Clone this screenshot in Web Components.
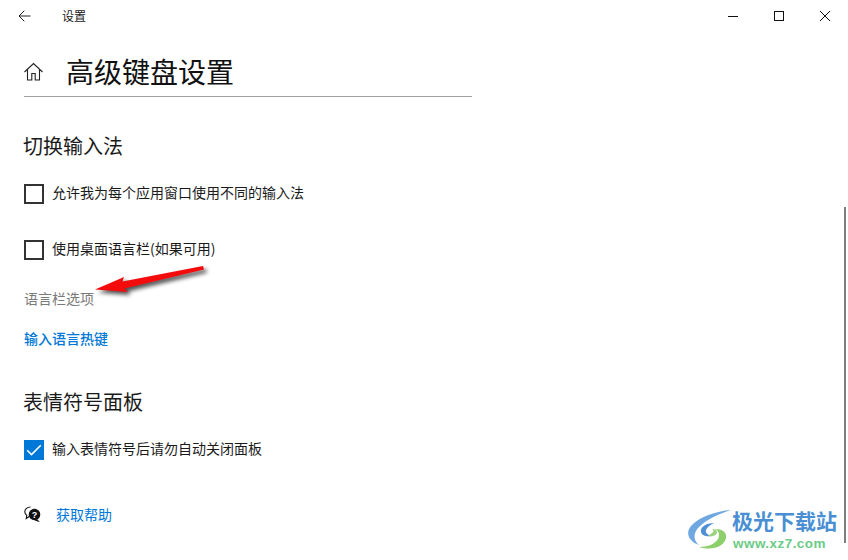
<!DOCTYPE html>
<html lang="zh-CN"><head><meta charset="utf-8">
<style>
html,body{margin:0;padding:0;background:#fff}
body{width:848px;height:560px;overflow:hidden;font-family:"Noto Sans CJK SC","Noto Sans",sans-serif;color:#000}
</style></head><body>
<settings-app>
  <title-bar slot="bar">设置</title-bar>
  <page-title>高级键盘设置</page-title>
  <section-head style="--top:30px">切换输入法</section-head>
  <check-row style="--top:19px">允许我为每个应用窗口使用不同的输入法</check-row>
  <check-row style="--top:36px">使用桌面语言栏(如果可用)</check-row>
  <muted-label>语言栏选项</muted-label>
  <link-row style="--top:20px">输入语言热键</link-row>
  <section-head style="--top:35px">表情符号面板</section-head>
  <check-row style="--top:19px" checked>输入表情符号后请勿自动关闭面板</check-row>
  <help-row>获取帮助</help-row>
  <red-arrow slot="over"></red-arrow>
  <scroll-thumb slot="over"></scroll-thumb>
  <brand-mark slot="over"></brand-mark>
</settings-app>
<script>
function def(name,html){
  customElements.define(name,class extends HTMLElement{
    constructor(){super();this.attachShadow({mode:'open'}).innerHTML=html;}
  });
}
def('settings-app',`<style>
:host{display:block;position:relative;width:848px;height:560px;overflow:hidden;background:#fff}
main{display:flex;flex-direction:column;align-items:flex-start;padding:0 0 0 24px}
</style><slot name="bar"></slot><main><slot></slot></main><slot name="over"></slot>`);
def('title-bar',`<style>
:host{display:flex;align-items:center;height:32px;font-size:12px;color:#1a1a1a}
.b{display:flex;align-items:center;justify-content:center}
.back{width:48px;margin-top:-1px}
.t{flex:1;padding-left:14px;line-height:32px}
.w{width:46px;height:32px}
svg{display:block}
</style>
<div class="b back"><svg width="13" height="12" viewBox="0 0 13 12" fill="none" stroke="#222" stroke-width="1"><path d="M12.500 6H1M6.300.7 1 6l5.300 5.300"/></svg></div>
<div class="t"><slot></slot></div>
<div class="b w"><svg width="10" height="10"><path d="M0 5.500h10" stroke="#111" stroke-width="1"/></svg></div>
<div class="b w"><svg width="10" height="10"><rect x=".5" y=".5" width="9" height="9" fill="none" stroke="#111"/></svg></div>
<div class="b w"><svg width="10" height="10"><path d="M0 0l10 10M10 0 0 10" stroke="#111" stroke-width="1"/></svg></div>`);
def('page-title',`<style>
:host{display:flex;align-items:center;width:448px;height:64px;border-bottom:1px solid #a0a0a0}
svg{display:block;margin:15px 22px 0 -1px}
span{font-size:28px;line-height:38px;color:#111;margin-top:13px;font-weight:400}
</style><svg width="21" height="19" viewBox="0 0 21 19" fill="none" stroke="#222" stroke-width="1.100"><path d="M1.500 10 10.500 1.500 19.500 10M4.500 7.500V18h4.300v-6.500h3.400V18h4.300V7.500"/></svg><span><slot></slot></span>`);
def('section-head',`<style>
:host{display:block;margin-top:var(--top);font-size:20px;line-height:38px;height:38px;color:#1a1a1a;margin-left:-1px}
</style><slot></slot>`);
def('check-row',`<style>
:host{display:flex;align-items:center;gap:8px;margin-top:var(--top);height:20px;font-size:14px;line-height:20px;color:#1a1a1a}
.box{width:20px;height:20px;box-sizing:border-box;border:2px solid #333;background:#fff}
:host([checked]) .box{border:0;background:#0078d7}
svg{display:none}
:host([checked]) svg{display:block}
span{margin-bottom:4px}
</style><div class="box"><svg width="20" height="20" fill="none" stroke="#fff" stroke-width="1.600"><path d="M3.200 10.300 7.500 14.600 16.800 5.300"/></svg></div><span><slot></slot></span>`);
def('muted-label',`<style>
:host{display:block;margin-top:28px;font-size:14px;line-height:20px;color:#7a7a7a}
</style><slot></slot>`);
def('link-row',`<style>
:host{display:block;margin-top:var(--top);font-size:14px;line-height:20px;font-weight:500;color:#0078d7}
</style><slot></slot>`);
def('help-row',`<style>
:host{display:flex;align-items:center;gap:15px;margin-top:45px;height:20px;font-size:14px;line-height:20px;color:#0078d7}
svg{display:block;margin-top:-1px}
span{margin-bottom:2px}
</style><svg width="17" height="17" viewBox="0 0 17 17"><path d="M6.500 1C3.300 1 .8 3.100.8 5.800c0 1.500.8 2.800 2 3.600L2.200 12.500l3-2" fill="none" stroke="#111" stroke-width="1.100"/><circle cx="10.500" cy="8.500" r="5.800" fill="#111"/><path d="M13 13l3 3.200-5.300-1.700z" fill="#111"/><text x="10.500" y="11.600" font-size="9" font-weight="700" text-anchor="middle" fill="#fff" font-family="Liberation Sans">?</text></svg><span><slot></slot></span>`);
def('red-arrow',`<style>
:host{position:absolute;left:85px;top:258px;display:block;width:135px;height:50px}
svg{display:block;overflow:visible}
</style><svg width="135" height="50" viewBox="85 258 135 50"><defs><filter id="s" x="-20%" y="-60%" width="140%" height="240%"><feGaussianBlur stdDeviation="2.200"/></filter></defs>
<path d="M95 289.500 124 277 122.500 281.500 203 266 204 269.500 124.500 288.500 128 292z" fill="#000" opacity=".7" filter="url(#s)" transform="translate(3 3)"/>
<path d="M95 289.500 124 277 122.500 281.500 203 266 204 269.500 124.500 288.500 128 292z" fill="#f40c0c"/></svg>`);
def('scroll-thumb',`<style>
:host{position:absolute;left:844px;top:207px;width:2px;height:336px;background:#7e7e7e;display:block}
</style>`);
def('brand-mark',`<style>
:host{position:absolute;left:686px;top:506px;display:flex;align-items:flex-start;width:156px;height:48px;background:#fff}
svg{display:block;flex:none;margin-top:3px}
.c{display:flex;flex-direction:column}
.a{font-size:21px;line-height:28px;font-weight:700;color:#4a8fd3;white-space:nowrap}
.b{font:700 13.500px/15px "Liberation Sans",sans-serif;color:#6ccb86;white-space:nowrap;letter-spacing:.45px;margin:2px 0 0 1px}
</style><svg width="46" height="42" viewBox="0 0 46 42" fill="none">
<path d="M45 1C30 2 13 8 5 17c-6 7-2 16 8 19C7 31 7 24 13 18 21 10 33 5 45 1z" fill="#6fa8e0"/>
<path d="M28 14c-8 0-14 4-13 9 1 4 6 5 11 4-4-1-7-3-6-6 1-3 4-5 8-7z" fill="#4f8fd6"/>
<path d="M13 38c13 4 25 0 27-9 1-6-4-9-11-9 4 2 5 6 3 10-3 5-10 8-19 8z" fill="#8ccf6b"/>
<path d="M22 27c5 1 9-1 9-4 0-2-2-3-5-3 2 1 2 3 0 4-1 1-3 2-4 3z" fill="#9ad27e"/>
</svg><div class="c"><div class="a">极光下载站</div><div class="b">www.xz7.com</div></div>`);
</script></body></html>
